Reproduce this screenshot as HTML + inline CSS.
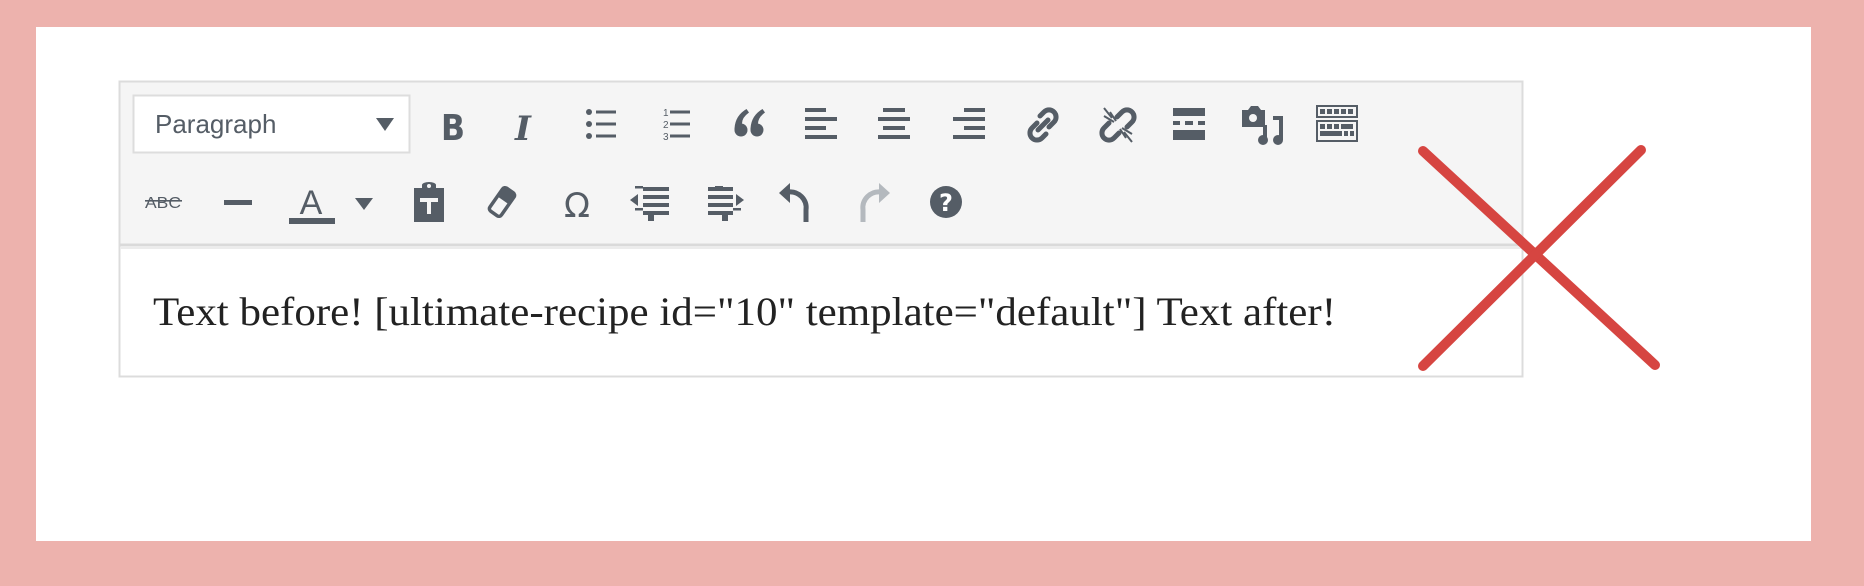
<!DOCTYPE html>
<html><head><meta charset="utf-8"><style>
html,body{margin:0;padding:0}
body{width:1864px;height:586px;background:#edb2ad;position:relative;overflow:hidden}
</style></head><body>
<svg width="1864" height="586" viewBox="0 0 1864 586" style="position:absolute;left:0;top:0">
<rect x="36" y="27" width="1775" height="514" fill="#fff"/>
<rect x="119.5" y="81.5" width="1403" height="295" fill="#fff" stroke="#dcdcdc" stroke-width="2"/>
<rect x="120.5" y="82.5" width="1401" height="162" fill="#f5f5f5"/>
<line x1="120" y1="245" x2="1522" y2="245" stroke="#dadada" stroke-width="3"/>
<line x1="120" y1="248" x2="1522" y2="248" stroke="#ececec" stroke-width="2"/>
<rect x="133.5" y="95.5" width="276" height="57" fill="#fff" stroke="#dddddd" stroke-width="2"/>
<text x="155" y="133" font-family="Liberation Sans, sans-serif" font-size="26" fill="#555d66">Paragraph</text>
<path d="M376 118h18l-9 13z" fill="#555d66"/>
<g fill="#555d66" stroke="none">
<text x="453" y="140" font-family="DejaVu Sans, sans-serif" font-weight="bold" font-size="36" text-anchor="middle" textLength="24" lengthAdjust="spacingAndGlyphs">B</text>
<text x="523" y="140" font-family="DejaVu Serif, serif" font-weight="bold" font-style="italic" font-size="34" text-anchor="middle">I</text>
<circle cx="589" cy="112" r="3"/><circle cx="589" cy="124" r="3"/><circle cx="589" cy="136" r="3"/>
<rect x="596" y="110.5" width="20" height="3"/><rect x="596" y="122.5" width="20" height="3"/><rect x="596" y="134.5" width="20" height="3"/>
<text x="663" y="116" font-family="Liberation Sans, sans-serif" font-size="10">1</text>
<text x="663" y="128" font-family="Liberation Sans, sans-serif" font-size="10">2</text>
<text x="663" y="140" font-family="Liberation Sans, sans-serif" font-size="10">3</text>
<rect x="670" y="110.5" width="20" height="3"/><rect x="670" y="122.5" width="20" height="3"/><rect x="670" y="134.5" width="20" height="3"/>
<circle cx="741" cy="130" r="6.5"/>
<path d="M734.5 130q0-14 12-21l2.5 3.5q-7 5-7 11z"/>
<circle cx="757" cy="130" r="6.5"/>
<path d="M750.5 130q0-14 12-21l2.5 3.5q-7 5-7 11z"/>
<rect x="805" y="108" width="21" height="4"/><rect x="805" y="117" width="32" height="4"/><rect x="805" y="126" width="21" height="4"/><rect x="805" y="135" width="32" height="4"/>
<rect x="883" y="108" width="22" height="4"/><rect x="878" y="117" width="32" height="4"/><rect x="883" y="126" width="22" height="4"/><rect x="878" y="135" width="32" height="4"/>
<rect x="964" y="108" width="21" height="4"/><rect x="953" y="117" width="32" height="4"/><rect x="964" y="126" width="21" height="4"/><rect x="953" y="135" width="32" height="4"/>
</g>
<g fill="none" stroke="#555d66" stroke-width="5" stroke-linecap="round">
<path d="M1040 116l4-4a7 7 0 0 1 10 10l-5 5"/>
<path d="M1046 134l-4 4a7 7 0 0 1-10-10l5-5"/>
<path d="M1038 130l10-10"/>
<path d="M1117 117l5-5a7 7 0 0 1 10 10l-5 5" />
<path d="M1119 133l-5 5a7 7 0 0 1-10-10l5-5"/>
</g>
<g stroke="#555d66" stroke-width="2">
<path d="M1110 112l6 9M1104 116l10 6M1104 108l8 10M1126 138l-6-9M1132 134l-10-6M1132 142l-8-10"/>
</g>
<g fill="#555d66">
<rect x="1173" y="108" width="32" height="8"/><rect x="1173" y="121" width="7" height="4"/><rect x="1185" y="121" width="8" height="4"/><rect x="1198" y="121" width="7" height="4"/><rect x="1173" y="130" width="32" height="10"/>
<path d="M1242 110h6l3-4h7l3 4h4v17h-23z"/>
<circle cx="1253" cy="118" r="4" fill="#f5f5f5"/>
<rect x="1279" y="116" width="4" height="24"/><rect x="1273" y="116" width="10" height="4"/>
<circle cx="1278" cy="140" r="5"/>
<rect x="1263" y="125" width="4" height="15"/><circle cx="1263" cy="140" r="5"/>
</g>
<g fill="none" stroke="#555d66" stroke-width="2">
<rect x="1317" y="106" width="40" height="11"/><rect x="1317" y="121" width="40" height="20"/>
</g>
<g fill="#555d66">
<rect x="1320" y="109" width="5" height="5"/><rect x="1327" y="109" width="5" height="5"/><rect x="1334" y="109" width="5" height="5"/><rect x="1341" y="109" width="5" height="5"/><rect x="1348" y="109" width="5" height="5"/>
<rect x="1320" y="124" width="5" height="5"/><rect x="1327" y="124" width="5" height="5"/><rect x="1334" y="124" width="5" height="5"/><rect x="1341" y="124" width="12" height="5"/>
<rect x="1320" y="131" width="22" height="5"/><rect x="1344" y="131" width="4" height="5"/><rect x="1350" y="131" width="4" height="5"/>
</g>
<g fill="#555d66">
<text x="163" y="208" font-family="Liberation Sans, sans-serif" font-size="16" text-anchor="middle" textLength="36" lengthAdjust="spacingAndGlyphs">ABC</text>
<rect x="145" y="200" width="37" height="1.6"/>
<rect x="224" y="200" width="28" height="5"/>
<text x="311" y="214" font-family="Liberation Sans, sans-serif" font-size="34" text-anchor="middle">A</text>
<rect x="289" y="218" width="46" height="6"/>
<path d="M355 198h18l-9 12z"/>
<path d="M414 188h8v-3a7 3 0 0 1 14 0v3h8v34h-30z"/>
<circle cx="429" cy="186" r="2" fill="#f5f5f5"/>
<rect x="420" y="198" width="18" height="4" fill="#f5f5f5"/><rect x="427" y="198" width="4" height="16" fill="#f5f5f5"/>
</g>
<g transform="rotate(-55 502 202)">
<rect x="488" y="195" width="28" height="14" rx="3" fill="none" stroke="#555d66" stroke-width="3.5"/>
<rect x="504" y="195" width="12" height="14" rx="2" fill="#555d66"/>
</g>
<g fill="#555d66">
<text x="577" y="217" font-family="DejaVu Sans, sans-serif" font-size="34" text-anchor="middle">Ω</text>
<rect x="635" y="186" width="8" height="2.5"/><rect x="643" y="187" width="26" height="4"/><rect x="643" y="195" width="26" height="4"/><rect x="643" y="203" width="26" height="4"/><rect x="643" y="211" width="26" height="4"/><rect x="635" y="208" width="8" height="2.5"/><rect x="648" y="215" width="6" height="6"/>
<path d="M630 200l8-6v12z"/>
<rect x="715" y="186" width="8" height="2.5"/><rect x="708" y="187" width="25" height="4"/><rect x="708" y="195" width="25" height="4"/><rect x="708" y="203" width="25" height="4"/><rect x="708" y="211" width="25" height="4"/><rect x="733" y="208" width="8" height="2.5"/><rect x="722" y="215" width="6" height="6"/>
<path d="M744 200l-8-6v12z"/>
</g>
<path d="M788 192a16 16 0 0 1 18 18v12" fill="none" stroke="#555d66" stroke-width="5"/>
<path d="M779 193l11-10v20z" fill="#555d66"/>
<path d="M881 192a16 16 0 0 0 -18 18v12" fill="none" stroke="#b4b9be" stroke-width="5"/>
<path d="M890 193l-11-10v20z" fill="#b4b9be"/>
<circle cx="946" cy="202" r="16" fill="#555d66"/>
<text x="946" y="211" font-family="DejaVu Sans, sans-serif" font-weight="bold" font-size="24" fill="#fff" text-anchor="middle">?</text>
<text x="153" y="325" font-family="Liberation Serif, serif" font-size="40" fill="#222" textLength="1183" lengthAdjust="spacingAndGlyphs">Text before! [ultimate-recipe id="10" template="default"] Text after!</text>
<g stroke="#d64541" stroke-width="10" stroke-linecap="round">
<line x1="1423" y1="151" x2="1655" y2="365"/>
<line x1="1641" y1="150" x2="1423" y2="366"/>
</g>
</svg>
</body></html>
